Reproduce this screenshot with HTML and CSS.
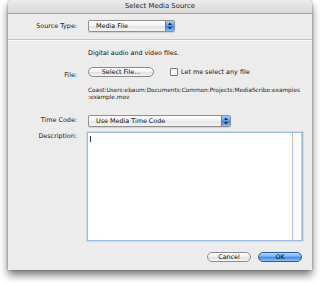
FILE: index.html
```html
<!DOCTYPE html>
<html>
<head>
<meta charset="utf-8">
<link rel="stylesheet" href="styles.css">
</head>
<body>
<div class="window">
  <div class="titlebar">Select Media Source</div>
  <div class="top grid">
    <div class="label">Source Type:</div>
    <div class="popup popup-short"><span class="popup-text">Media File</span><span class="popup-arrows"><svg width="8" height="10" viewBox="0 0 8 10"><path d="M4 1.5 L6 4 H2 Z M4 8.5 L6 6 H2 Z" fill="#1a2a50"/></svg></span></div>
  </div>
  <div class="body grid">
    <div></div>
    <div class="info">Digital audio and video files.</div>

    <div class="label file-label">File:</div>
    <div class="file-row">
      <div class="btn select-btn">Select File...</div>
      <label class="check"><span class="box"></span>Let me select any file</label>
    </div>

    <div></div>
    <div class="path">Coast:Users:ebaum:Documents:Common:Projects:MediaScribe:examples<br>:example.mov</div>

    <div class="label tc-label">Time Code:</div>
    <div class="popup popup-long tc-popup"><span class="popup-text">Use Media Time Code</span><span class="popup-arrows"><svg width="8" height="10" viewBox="0 0 8 10"><path d="M4 1.5 L6 4 H2 Z M4 8.5 L6 6 H2 Z" fill="#1a2a50"/></svg></span></div>

    <div class="label desc-label">Description:</div>
    <div class="textarea">
      <div class="text-area-main"><span class="caret"></span></div>
      <div class="scroll"></div>
    </div>
  </div>
  <div class="footer">
    <div class="btn cancel">Cancel</div>
    <div class="btn ok">OK</div>
  </div>
</div>
</body>
</html>
```

FILE: styles.css
```css
html, body {
  margin: 0;
  padding: 0;
  background: #ffffff;
}
body {
  font-family: "DejaVu Sans", "Liberation Sans", sans-serif;
  font-size: 6.4px;
  color: #111;
  width: 320px;
  height: 283px;
  overflow: hidden;
}
.window {
  margin-left: 8px;
  width: 304px;
  height: 270px;
  background: #ececec;
  border-radius: 4px 4px 0 0;
  box-shadow: 0 5px 9px rgba(0,0,0,0.55), 0 0 2px rgba(0,0,0,0.45);
  display: flex;
  flex-direction: column;
}
.titlebar {
  height: 13px;
  line-height: 13px;
  text-align: center;
  font-size: 6.9px;
  color: #1a1a1a;
  background: linear-gradient(#ececec, #d8d8d8);
  border-radius: 4px 4px 0 0;
  border-bottom: 1px solid #a4a4a4;
}
.grid {
  display: grid;
  grid-template-columns: 69px 1fr;
  column-gap: 11px;
  align-items: center;
}
.label {
  text-align: right;
  color: #222;
}
.top {
  padding-top: 6px;
  padding-bottom: 7px;
  border-bottom: 1px solid #c4c4c4;
  box-shadow: 0 1px 0 #fafafa;
}
.popup {
  height: 12px;
  box-sizing: border-box;
  border: 1px solid #8f8f8f;
  border-radius: 2px;
  background: linear-gradient(#ffffff, #f2f2f2 50%, #e4e4e4 51%, #f4f4f4);
  display: flex;
  align-items: center;
  justify-content: space-between;
  box-shadow: 0 1px 1px rgba(0,0,0,0.12);
}
.popup-short { width: 87px; }
.popup-long { width: 143px; }
.popup-text {
  padding-left: 7px;
  color: #111;
}
.popup-arrows {
  width: 8px;
  height: 10px;
  background: linear-gradient(#a9cdf3, #5a9ae6 50%, #3a80de 51%, #8cc0f4);
  border-left: 1px solid #5a7fb0;
  border-radius: 0 1px 1px 0;
  display: flex;
}
.body {
  padding-top: 9px;
  align-items: start;
}
.info {
  line-height: 8px;
}
.file-label {
  margin-top: 13px;
  line-height: 8px;
  padding-top: 1px;
}
.file-row {
  margin-top: 10px;
  display: flex;
  align-items: center;
}
.btn {
  box-sizing: border-box;
  height: 10px;
  line-height: 8px;
  border-radius: 5px;
  text-align: center;
  font-size: 6.4px;
}
.select-btn {
  width: 66px;
  border: 1px solid #8a8a8a;
  background: linear-gradient(#ffffff, #f0f0f0 50%, #dedede 51%, #f6f6f6);
}
.check {
  display: flex;
  align-items: center;
  margin-left: 16px;
}
.box {
  width: 6px;
  height: 6px;
  border: 1px solid #7a7a7a;
  background: linear-gradient(#f4f4f4, #ffffff);
  margin-right: 3px;
  border-radius: 1px;
}
.path {
  margin-top: 8px;
  line-height: 7px;
  font-size: 5.8px;
  color: #1a1a1a;
}
.tc-label {
  margin-top: 14px;
  line-height: 11px;
}
.tc-popup {
  margin-top: 14px;
}
.desc-label {
  margin-top: 6px;
  line-height: 7px;
}
.textarea {
  margin-top: 5px;
  width: 216px;
  height: 109px;
  box-sizing: border-box;
  margin-left: -1px;
  border: 1px solid #9cbde0;
  box-shadow: 0 0 0 1px #c9dcf0;
  background: #fff;
  display: flex;
}
.text-area-main {
  flex: 1;
  padding: 3px 2px;
}
.caret {
  display: block;
  width: 1px;
  height: 6px;
  background: #333;
}
.scroll {
  width: 8px;
  border-left: 1px solid #c2c2c2;
  background: linear-gradient(90deg, #f6f6f6, #ffffff);
  border-right: 1px solid #b8d0ea;
}
.footer {
  margin-top: auto;
  padding: 0 10px 8px 0;
  display: flex;
  justify-content: flex-end;
  gap: 7px;
}
.cancel {
  width: 44px;
  border: 1px solid #8a8a8a;
  background: linear-gradient(#ffffff, #f0f0f0 50%, #dedede 51%, #f6f6f6);
}
.ok {
  width: 44px;
  border: 1px solid #2a5caa;
  background: linear-gradient(#b8d8fa, #6aa8ee 50%, #3c86e4 51%, #8cc4f8);
  color: #0a0a0a;
}
```
